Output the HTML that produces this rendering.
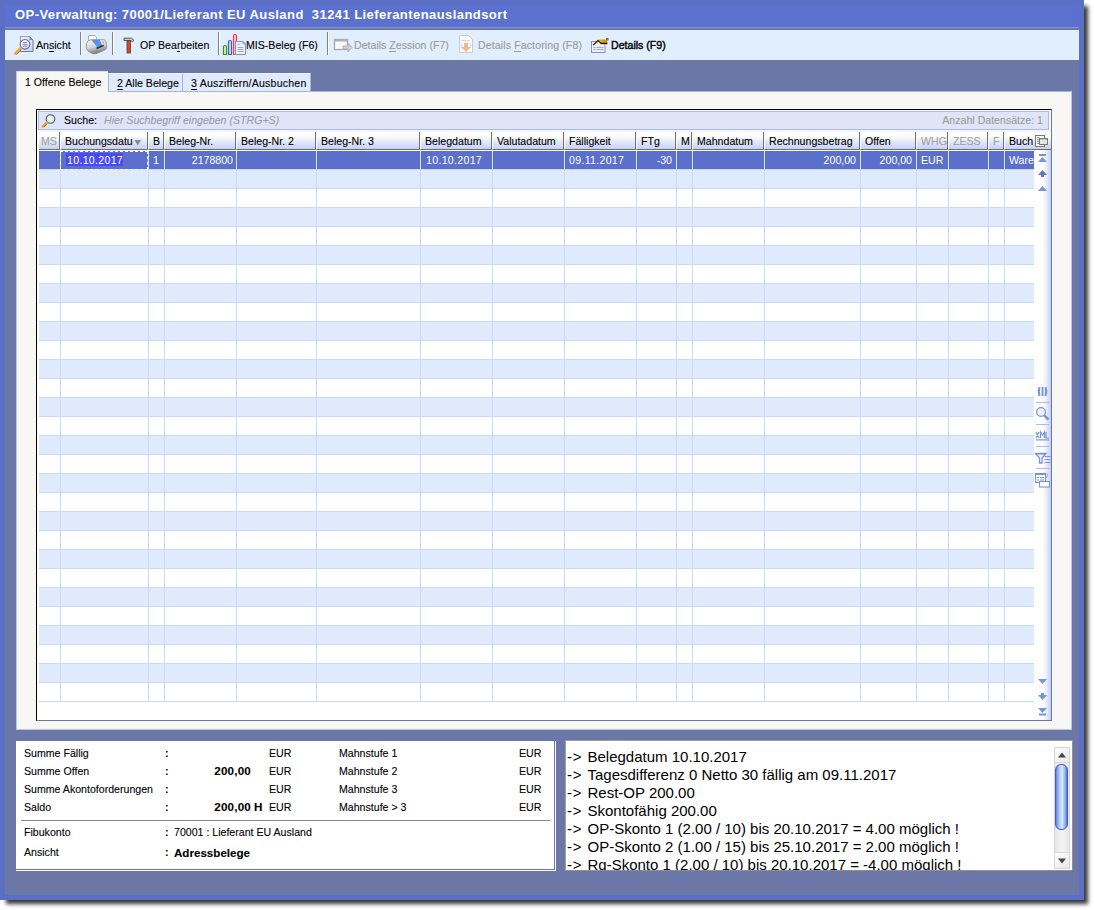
<!DOCTYPE html>
<html><head><meta charset="utf-8">
<style>
*{box-sizing:border-box;margin:0;padding:0}
html,body{width:1094px;height:910px;overflow:hidden;background:#fff;position:relative;font-family:"Liberation Sans",sans-serif;font-size:11px;color:#000}
.t,.st,.hc span{-webkit-text-stroke:0.1px currentColor}
.a{position:absolute}
.t{position:absolute;white-space:pre;line-height:13px;font-size:10.6px}
svg{position:absolute;overflow:visible}
u{text-decoration:none;border-bottom:1px solid currentColor}
.dis{color:#9a9a9a}
.sep{position:absolute;top:32px;width:2px;height:23px;border-left:1px solid #828282;border-right:1px solid #fff}
.hc{position:absolute;top:132px;height:18px;background:linear-gradient(to bottom,#ffffff 0%,#fbfcff 25%,#e2e8f8 60%,#c6d1f1 100%);border-right:1px solid #6e6e6e;border-bottom:1px solid #6e6e6e;border-left:1px solid #fff;overflow:hidden}
.hc span{position:absolute;left:4px;top:3px;white-space:pre;line-height:13px;font-size:10.6px}
.vl{position:absolute;top:151px;width:1px;height:551px;background:#c8d9fa}
.row{position:absolute;left:39px;width:995px;height:19px;border-bottom:1px solid #c8d8f8}
.rt{position:absolute;top:155px;white-space:pre;line-height:13px;font-size:10.6px;color:#fff}
.st{position:absolute;white-space:pre;line-height:13px;font-size:10.6px}
.nsep{position:absolute;left:1036px;width:13px;height:1px;background:#b3b9f2}
</style></head><body>

<div class="a" style="left:0;top:0;width:1084px;height:900px;background:#5b70c5;box-shadow:5px 5px 4px -1px rgba(0,0,0,0.78)"></div>
<div class="a" style="left:5px;top:27px;width:1074px;height:868px;background:#6b78a7"></div>
<div class="a" style="left:5px;top:5px;width:1074px;height:22px;background:#5a71d0"></div>
<div class="a" style="left:5px;top:27px;width:1074px;height:1px;background:#8796cc"></div>
<div class="a" style="left:15px;top:6px;font-weight:bold;font-size:13px;letter-spacing:0.43px;color:#fff;white-space:pre;line-height:17px">OP-Verwaltung: 70001/Lieferant EU Ausland  31241 Lieferantenauslandsort</div>
<div class="a" style="left:5px;top:30px;width:1074px;height:30px;background:#e1eefd"></div>
<span class="t" style="left:36px;top:39px">An<u>s</u>icht</span>
<div class="sep" style="left:80px"></div>
<div class="sep" style="left:112px"></div>
<span class="t" style="left:140px;top:39px">OP Bea<u>r</u>beiten</span>
<div class="sep" style="left:218px"></div>
<span class="t" style="left:246px;top:39px">MIS-Beleg (F6)</span>
<div class="sep" style="left:327px"></div>
<span class="t dis" style="left:354px;top:39px">Details <u>Z</u>ession (F7)</span>
<span class="t dis" style="left:478px;top:39px;letter-spacing:0.1px">Details <u>F</u>actoring (F8)</span>
<span class="t" style="left:611px;top:39px;-webkit-text-stroke:0.4px #000">Details (F9)</span>
<svg style="left:12px;top:34px" width="22" height="22" viewBox="0 0 22 22">
<defs><linearGradient id="dg" x1="0" y1="0" x2="1" y2="1"><stop offset="0" stop-color="#f4f6ff"/><stop offset="1" stop-color="#c6cff8"/></linearGradient>
<radialGradient id="lg" cx="0.35" cy="0.35" r="0.8"><stop offset="0" stop-color="#ffffff"/><stop offset="1" stop-color="#bfe4fb"/></radialGradient></defs>
<path d="M8.5 2.5h9l3.5 3.5v11.5h-12.5z" fill="url(#dg)" stroke="#77779a" stroke-width="1"/>
<path d="M8.5 17.5v-15h9" fill="none" stroke="#8fa2e2" stroke-width="1"/>
<path d="M17.5 2.5l3.5 3.5h-3.5z" fill="#5a8ee8"/>
<circle cx="13" cy="10.3" r="4.8" fill="url(#lg)" stroke="#6d6a86" stroke-width="1.1"/>
<path d="M11 8.6h4M10.6 10.4h4.8M11 12.2h4" stroke="#7a70c0" stroke-width="0.9"/>
<path d="M8.6 14.2l-5.3 5.3" stroke="#f3a530" stroke-width="2.6" stroke-linecap="round"/>
<path d="M9.4 15.6l-5 5" stroke="#6f6f90" stroke-width="0.9"/>
</svg>
<svg style="left:85px;top:34px" width="23" height="20" viewBox="0 0 23 20">
<defs><linearGradient id="pg" x1="0" y1="0" x2="0.3" y2="1"><stop offset="0" stop-color="#fafafa"/><stop offset="0.55" stop-color="#d6d6d6"/><stop offset="1" stop-color="#7c7c7c"/></linearGradient></defs>
<path d="M3.5 1.5h6.5l1.5 2v3h-8z" fill="#fff" stroke="#a9a9b0" stroke-width="0.9"/>
<path d="M1.2 12q0-5.5 4.8-6.3h13q2.5.8 2.6 5v2.5q-.3 2.8-3 3.3l-6.5 2.8q-3 1.2-5.5 0l-3.8-2.5q-1.6-1.6-1.6-4.8z" fill="url(#pg)" stroke="#8a8a8a" stroke-width="0.8"/>
<path d="M6.3 5.8h8.4l2.6 5.6-5.2 1.6z" fill="#4f95ea"/>
<path d="M11.5 13.3l7.3-2.6v1.6l-7.3 3z" fill="#2e2e2e"/>
<circle cx="18.2" cy="8.3" r="0.9" fill="#f0a020"/>
</svg>
<svg style="left:123px;top:37px" width="12" height="17" viewBox="0 0 12 17">
<path d="M1 1.2h7.5l2.5 2.2-1.5 1.3-1.5-1.2H1z" fill="#cfcfcf" stroke="#555" stroke-width="1"/>
<rect x="4" y="4" width="3.5" height="12" fill="#e8401a" stroke="#444" stroke-width="0.8"/>
</svg>
<svg style="left:222px;top:33px" width="26" height="23" viewBox="0 0 26 23">
<path d="M1.5 21.5v-7.5a1.5 1.5 0 0 1 3 0v7.5z" fill="#d8f0d0" stroke="#2a9a10" stroke-width="1.2"/>
<path d="M6.5 21.5v-12.5a1.5 1.5 0 0 1 3 0v12.5z" fill="#d8def5" stroke="#3d5ce0" stroke-width="1.2"/>
<path d="M11.5 21.5v-18.5a1.5 1.5 0 0 1 3 0v18.5z" fill="#e8d0d0" stroke="#ee4040" stroke-width="1.2"/>
<path d="M13.5 8.5h7.5l2.5 2.5v10.5h-10z" fill="#eef1ff" stroke="#8a8fb0"/>
<path d="M21 8.5v2.5h2.5" fill="#7aa0f0" stroke="#7aa0f0" stroke-width="0.8"/>
<path d="M15.5 14.5h6M15.5 16.5h6M15.5 18.5h6M15.5 11.5h2" stroke="#7d93d6" stroke-width="0.8"/>
</svg>
<svg style="left:333px;top:38px" width="20" height="15" viewBox="0 0 20 15">
<rect x="1.5" y="1.5" width="13" height="10" fill="#fafafa" stroke="#a8a8a8" stroke-width="1.3"/>
<rect x="1.5" y="1.5" width="13" height="2" fill="#b0b0b0"/>
<path d="M10 8h5v-3l4 4.5-4 4.5v-3h-5z" fill="#d0d0d0" stroke="#a8a8a8" stroke-width="0.8"/>
</svg>
<svg style="left:458px;top:34px" width="16" height="20" viewBox="0 0 16 20">
<path d="M1.5 1.5h9l4 4v13h-13z" fill="#fbfbfd" stroke="#c8cad6"/>
<path d="M3.5 6.5h9" stroke="#d6d8e6" stroke-width="1.2"/>
<path d="M3.5 9v5M12.5 9v5" stroke="#dfe3ee" stroke-width="1.3"/><path d="M6 9h4v4h3l-5 5-5-5h3z" fill="#f6b890"/>
</svg>
<svg style="left:590px;top:36px" width="20" height="18" viewBox="0 0 20 18">
<defs><linearGradient id="yg" x1="0" y1="0" x2="1" y2="0"><stop offset="0" stop-color="#f6d000"/><stop offset="1" stop-color="#e08a00"/></linearGradient></defs>
<rect x="1.5" y="5.5" width="13.5" height="11" fill="#eef0ff" stroke="#8a8fc0"/>
<path d="M3.5 11.5h2M6.5 11.5h7M3.5 13.5h2M6.5 13.5h7" stroke="#8ea0e0" stroke-width="0.9"/>
<path d="M4 8.5l4-5h9v5h-5.5l-2.5-2.5z" fill="url(#yg)"/>
<path d="M3.3 9l4.7-4.6 3 3h6.5" stroke="#111" stroke-width="1.1" fill="none"/>
<rect x="16" y="2" width="2.5" height="2.5" fill="#5566cc"/>
</svg>
<div class="a" style="left:16px;top:91px;width:1056px;height:639px;background:#f8f7f3;border-top:1px solid #a4b4da;border-left:1px solid #b8c7e8;border-right:1px solid #b8c7e8;border-bottom:1px solid #b8c7e8"></div>
<div class="a" style="left:108px;top:73px;width:75px;height:19px;background:#dfebfc;border:1px solid #a4b6dc;border-top-color:#eef3fd"></div>
<span class="t" style="left:117px;top:77px"><u>2</u> Alle Belege</span>
<div class="a" style="left:182px;top:73px;width:129px;height:19px;background:#dfebfc;border:1px solid #a4b6dc;border-top-color:#eef3fd;border-left-color:#a4b6dc"></div>
<span class="t" style="left:191px;top:77px;letter-spacing:0.2px"><u>3</u> Ausziffern/Ausbuchen</span>
<div class="a" style="left:16px;top:71px;width:92px;height:21px;background:#f8f7f3;border-top:1px solid #d6def2;border-left:1px solid #b8c7e8"></div>
<span class="t" style="left:25px;top:76px">1 Offene Belege</span>
<div class="a" style="left:36px;top:109px;width:1016px;height:612px;background:#fff;border-left:1px solid #000;border-top:1px solid #000;border-right:1px solid #6b78a7;border-bottom:1px solid #6b78a7"></div>
<div class="a" style="left:37px;top:110px;width:1014px;height:22px;background:#f7f6f2"></div>
<div class="a" style="left:38px;top:111px;width:1011px;height:19px;background:#dfe5f7;border:1px solid #a9bcec"></div>
<svg style="left:41px;top:113px" width="16" height="16" viewBox="0 0 16 16">
<circle cx="9.5" cy="6" r="4.3" fill="#d8f2ff" stroke="#555" stroke-width="1.1"/>
<circle cx="9" cy="5.3" r="2" fill="#fff" opacity="0.8"/>
<path d="M6.3 9.2l-4.5 4.5" stroke="#f0a030" stroke-width="2.5" stroke-linecap="round"/>
<path d="M6.3 10.5l-3.2 3.2" stroke="#666" stroke-width="1"/>
</svg>
<span class="st" style="left:64px;top:114px">Suche:</span>
<span class="st" style="left:104px;top:114px;font-style:italic;color:#9c9ca6">Hier Suchbegriff eingeben (STRG+S)</span>
<span class="st" style="right:51px;top:114px;color:#9c9c9c">Anzahl Datensätze: 1</span>
<div class="hc" style="left:39px;width:21px;border-left:none"><span style="color:#a0a0a0;left:2px">MS</span></div>
<div class="hc" style="left:60px;width:88px"><span style="">Buchungsdatum</span></div>
<div class="hc" style="left:148px;width:16px"><span style="">B</span></div>
<div class="hc" style="left:164px;width:72px"><span style="">Beleg-Nr.</span></div>
<div class="hc" style="left:236px;width:80px"><span style="">Beleg-Nr. 2</span></div>
<div class="hc" style="left:316px;width:104px"><span style="">Beleg-Nr. 3</span></div>
<div class="hc" style="left:420px;width:72px"><span style="">Belegdatum</span></div>
<div class="hc" style="left:492px;width:72px"><span style="">Valutadatum</span></div>
<div class="hc" style="left:564px;width:72px"><span style="">Fälligkeit</span></div>
<div class="hc" style="left:636px;width:40px"><span style="">FTg</span></div>
<div class="hc" style="left:676px;width:16px"><span style="">M</span></div>
<div class="hc" style="left:692px;width:72px"><span style="">Mahndatum</span></div>
<div class="hc" style="left:764px;width:96px"><span style="">Rechnungsbetrag</span></div>
<div class="hc" style="left:860px;width:56px"><span style="">Offen</span></div>
<div class="hc" style="left:916px;width:32px"><span style="color:#a0a0a0">WHG</span></div>
<div class="hc" style="left:948px;width:40px"><span style="color:#a0a0a0">ZESS</span></div>
<div class="hc" style="left:988px;width:16px"><span style="color:#a0a0a0">F</span></div>
<div class="hc" style="left:1004px;width:47px;border-right:none"><span style="">Buch</span></div>
<div class="a" style="left:133px;top:138px;width:9px;height:9px;background:linear-gradient(to bottom,#e6ebf8,#d0d9f3)"></div>
<svg style="left:134px;top:139px" width="8" height="8" viewBox="0 0 8 8"><path d="M0.5 1h6.5l-3.25 5.5z" fill="#8c8c8c"/></svg>
<svg style="left:1034px;top:134px" width="15" height="14" viewBox="0 0 15 14">
<rect x="1.5" y="1.5" width="9" height="11" fill="#fff" stroke="#777"/>
<path d="M3 3.6h2.5M3 5.6h2.5M3 7.6h2.5M3 9.6h2.5" stroke="#777" stroke-width="0.9"/>
<rect x="5.5" y="4.5" width="8" height="6" fill="#e6e6de" stroke="#777"/>
<rect x="5" y="4" width="9" height="1.3" fill="#777"/>
</svg>
<div class="a" style="left:37px;top:150px;width:1014px;height:1px;background:#fff"></div>
<div class="a" style="left:39px;top:151px;width:995px;height:18px;background:#5a70cc"></div>
<div class="a" style="left:39px;top:169px;width:995px;height:1px;background:#c8d9fa"></div>
<div class="a" style="left:39px;top:170px;width:995px;height:18px;background:#dfebfd"></div>
<div class="a" style="left:39px;top:188px;width:995px;height:1px;background:#c8d9fa"></div>
<div class="a" style="left:39px;top:189px;width:995px;height:18px;background:#fff"></div>
<div class="a" style="left:39px;top:207px;width:995px;height:1px;background:#c8d9fa"></div>
<div class="a" style="left:39px;top:208px;width:995px;height:18px;background:#dfebfd"></div>
<div class="a" style="left:39px;top:226px;width:995px;height:1px;background:#c8d9fa"></div>
<div class="a" style="left:39px;top:227px;width:995px;height:18px;background:#fff"></div>
<div class="a" style="left:39px;top:245px;width:995px;height:1px;background:#c8d9fa"></div>
<div class="a" style="left:39px;top:246px;width:995px;height:18px;background:#dfebfd"></div>
<div class="a" style="left:39px;top:264px;width:995px;height:1px;background:#c8d9fa"></div>
<div class="a" style="left:39px;top:265px;width:995px;height:18px;background:#fff"></div>
<div class="a" style="left:39px;top:283px;width:995px;height:1px;background:#c8d9fa"></div>
<div class="a" style="left:39px;top:284px;width:995px;height:18px;background:#dfebfd"></div>
<div class="a" style="left:39px;top:302px;width:995px;height:1px;background:#c8d9fa"></div>
<div class="a" style="left:39px;top:303px;width:995px;height:18px;background:#fff"></div>
<div class="a" style="left:39px;top:321px;width:995px;height:1px;background:#c8d9fa"></div>
<div class="a" style="left:39px;top:322px;width:995px;height:18px;background:#dfebfd"></div>
<div class="a" style="left:39px;top:340px;width:995px;height:1px;background:#c8d9fa"></div>
<div class="a" style="left:39px;top:341px;width:995px;height:18px;background:#fff"></div>
<div class="a" style="left:39px;top:359px;width:995px;height:1px;background:#c8d9fa"></div>
<div class="a" style="left:39px;top:360px;width:995px;height:18px;background:#dfebfd"></div>
<div class="a" style="left:39px;top:378px;width:995px;height:1px;background:#c8d9fa"></div>
<div class="a" style="left:39px;top:379px;width:995px;height:18px;background:#fff"></div>
<div class="a" style="left:39px;top:397px;width:995px;height:1px;background:#c8d9fa"></div>
<div class="a" style="left:39px;top:398px;width:995px;height:18px;background:#dfebfd"></div>
<div class="a" style="left:39px;top:416px;width:995px;height:1px;background:#c8d9fa"></div>
<div class="a" style="left:39px;top:417px;width:995px;height:18px;background:#fff"></div>
<div class="a" style="left:39px;top:435px;width:995px;height:1px;background:#c8d9fa"></div>
<div class="a" style="left:39px;top:436px;width:995px;height:18px;background:#dfebfd"></div>
<div class="a" style="left:39px;top:454px;width:995px;height:1px;background:#c8d9fa"></div>
<div class="a" style="left:39px;top:455px;width:995px;height:18px;background:#fff"></div>
<div class="a" style="left:39px;top:473px;width:995px;height:1px;background:#c8d9fa"></div>
<div class="a" style="left:39px;top:474px;width:995px;height:18px;background:#dfebfd"></div>
<div class="a" style="left:39px;top:492px;width:995px;height:1px;background:#c8d9fa"></div>
<div class="a" style="left:39px;top:493px;width:995px;height:18px;background:#fff"></div>
<div class="a" style="left:39px;top:511px;width:995px;height:1px;background:#c8d9fa"></div>
<div class="a" style="left:39px;top:512px;width:995px;height:18px;background:#dfebfd"></div>
<div class="a" style="left:39px;top:530px;width:995px;height:1px;background:#c8d9fa"></div>
<div class="a" style="left:39px;top:531px;width:995px;height:18px;background:#fff"></div>
<div class="a" style="left:39px;top:549px;width:995px;height:1px;background:#c8d9fa"></div>
<div class="a" style="left:39px;top:550px;width:995px;height:18px;background:#dfebfd"></div>
<div class="a" style="left:39px;top:568px;width:995px;height:1px;background:#c8d9fa"></div>
<div class="a" style="left:39px;top:569px;width:995px;height:18px;background:#fff"></div>
<div class="a" style="left:39px;top:587px;width:995px;height:1px;background:#c8d9fa"></div>
<div class="a" style="left:39px;top:588px;width:995px;height:18px;background:#dfebfd"></div>
<div class="a" style="left:39px;top:606px;width:995px;height:1px;background:#c8d9fa"></div>
<div class="a" style="left:39px;top:607px;width:995px;height:18px;background:#fff"></div>
<div class="a" style="left:39px;top:625px;width:995px;height:1px;background:#c8d9fa"></div>
<div class="a" style="left:39px;top:626px;width:995px;height:18px;background:#dfebfd"></div>
<div class="a" style="left:39px;top:644px;width:995px;height:1px;background:#c8d9fa"></div>
<div class="a" style="left:39px;top:645px;width:995px;height:18px;background:#fff"></div>
<div class="a" style="left:39px;top:663px;width:995px;height:1px;background:#c8d9fa"></div>
<div class="a" style="left:39px;top:664px;width:995px;height:18px;background:#dfebfd"></div>
<div class="a" style="left:39px;top:682px;width:995px;height:1px;background:#c8d9fa"></div>
<div class="a" style="left:39px;top:683px;width:995px;height:18px;background:#fff"></div>
<div class="a" style="left:39px;top:701px;width:995px;height:1px;background:#c8d9fa"></div>
<div class="vl" style="left:60px"></div>
<div class="vl" style="left:148px"></div>
<div class="vl" style="left:164px"></div>
<div class="vl" style="left:236px"></div>
<div class="vl" style="left:316px"></div>
<div class="vl" style="left:420px"></div>
<div class="vl" style="left:492px"></div>
<div class="vl" style="left:564px"></div>
<div class="vl" style="left:636px"></div>
<div class="vl" style="left:676px"></div>
<div class="vl" style="left:692px"></div>
<div class="vl" style="left:764px"></div>
<div class="vl" style="left:860px"></div>
<div class="vl" style="left:916px"></div>
<div class="vl" style="left:948px"></div>
<div class="vl" style="left:988px"></div>
<div class="vl" style="left:1004px"></div>
<div class="vl" style="left:1034px;background:#c8d8f8"></div>
<div class="a" style="left:60px;top:151px;width:1px;height:18px;background:#d8e2fb"></div>
<div class="a" style="left:148px;top:151px;width:1px;height:18px;background:#d8e2fb"></div>
<div class="a" style="left:164px;top:151px;width:1px;height:18px;background:#d8e2fb"></div>
<div class="a" style="left:236px;top:151px;width:1px;height:18px;background:#d8e2fb"></div>
<div class="a" style="left:316px;top:151px;width:1px;height:18px;background:#d8e2fb"></div>
<div class="a" style="left:420px;top:151px;width:1px;height:18px;background:#d8e2fb"></div>
<div class="a" style="left:492px;top:151px;width:1px;height:18px;background:#d8e2fb"></div>
<div class="a" style="left:564px;top:151px;width:1px;height:18px;background:#d8e2fb"></div>
<div class="a" style="left:636px;top:151px;width:1px;height:18px;background:#d8e2fb"></div>
<div class="a" style="left:676px;top:151px;width:1px;height:18px;background:#d8e2fb"></div>
<div class="a" style="left:692px;top:151px;width:1px;height:18px;background:#d8e2fb"></div>
<div class="a" style="left:764px;top:151px;width:1px;height:18px;background:#d8e2fb"></div>
<div class="a" style="left:860px;top:151px;width:1px;height:18px;background:#d8e2fb"></div>
<div class="a" style="left:916px;top:151px;width:1px;height:18px;background:#d8e2fb"></div>
<div class="a" style="left:948px;top:151px;width:1px;height:18px;background:#d8e2fb"></div>
<div class="a" style="left:988px;top:151px;width:1px;height:18px;background:#d8e2fb"></div>
<div class="a" style="left:1004px;top:151px;width:1px;height:18px;background:#d8e2fb"></div>
<div class="a" style="left:60px;top:151px;width:88px;height:19px;border:1px dashed #fff;border-top-color:#fff"></div>
<div class="a" style="left:66px;top:153px;width:57px;height:13px;background:#4a4af2"></div>
<span class="rt" style="left:67px;top:154px;letter-spacing:0.3px">10.10.2017</span>
<span class="rt" style="left:153px;top:154px">1</span>
<span class="rt" style="right:861px;top:154px">2178800</span>
<span class="rt" style="left:426px;top:154px;letter-spacing:0.3px">10.10.2017</span>
<span class="rt" style="left:569px;top:154px;letter-spacing:0.3px">09.11.2017</span>
<span class="rt" style="right:422px;top:154px">-30</span>
<span class="rt" style="right:238px;top:154px">200,00</span>
<span class="rt" style="right:182px;top:154px">200,00</span>
<span class="rt" style="left:921px;top:154px">EUR</span>
<div class="a" style="left:1004px;top:151px;width:30px;height:18px;overflow:hidden"><span class="rt" style="left:5px;top:3px">Ware</span></div>
<div class="a" style="left:1034px;top:150px;width:17px;height:570px;background:linear-gradient(to right,#fff 0%,#fff 50%,#e6ecfb 75%,#c2cef3 100%)"></div>
<svg style="left:1034px;top:150px" width="17" height="570" viewBox="0 0 17 570">
<rect x="5" y="4" width="7" height="2" fill="#7b93d9"/>
<path d="M4 12l4.5-5 4.5 5z" fill="#7b93d9"/>
<path d="M4 25l4.5-5 4.5 5h-3v2h-3v-2z" fill="#6676b0"/>
<path d="M4 41l4.5-5 4.5 5z" fill="#7b93d9"/>
<path d="M5.5 237.2q-1.6 4.3 0 8.6M11.5 237.2q1.6 4.3 0 8.6" stroke="#7b93d9" stroke-width="2.2" fill="none"/>
<rect x="7.6" y="237" width="1.9" height="9" fill="#7b93d9"/>
<rect x="2" y="252" width="13" height="1" fill="#b1b6f3"/>
<circle cx="7" cy="262" r="4.4" fill="#f2f0ff" stroke="#7b93d9" stroke-width="1.3"/>
<path d="M10 265.2l4.5 4.5" stroke="#7b93d9" stroke-width="2.6"/>
<rect x="2" y="274" width="13" height="1" fill="#b1b6f3"/>
<path d="M2 282l3 6M5 282l-3 6M6.5 288v-6l2 3 2-3v6M12 282v6h3" stroke="#7b93d9" stroke-width="1.2" fill="none"/>
<rect x="2" y="289.3" width="13" height="1.2" fill="#7b93d9"/>
<rect x="2" y="296" width="13" height="1" fill="#b1b6f3"/>
<path d="M1.5 303.5h10.5l-4 4.5v5h-2.5v-5z" fill="#f4f6ff" stroke="#7b93d9" stroke-width="1.3"/>
<rect x="1.5" y="303" width="10.5" height="1.5" fill="#7b93d9"/>
<path d="M10.5 306.5h6M10.5 309.5h6M10.5 312.5h6" stroke="#7b93d9" stroke-width="1.1"/>
<rect x="2" y="318" width="13" height="1" fill="#b1b6f3"/>
<rect x="1.5" y="323.5" width="10" height="9" fill="#fff" stroke="#7b93d9" stroke-width="1.1"/>
<rect x="1.5" y="323.5" width="10" height="1.5" fill="#7b93d9"/>
<path d="M3 327.5h2M6 327.5h4M3 330h2M6 330h4" stroke="#7b93d9" stroke-width="1"/>
<rect x="5.5" y="331.5" width="10" height="5.5" fill="#fff" stroke="#7b93d9" stroke-width="1.1"/>
<path d="M12.5 323.5q2 1.5 0 4l-1.5 1.5" stroke="#7b93d9" stroke-width="0.9" fill="none"/>
<path d="M4 529l4.5 5 4.5-5z" fill="#7b93d9"/>
<path d="M4 545h3v-2h3v2h3l-4.5 5z" fill="#7b93d9"/>
<path d="M4 558l4.5 5 4.5-5z" fill="#7b93d9"/>
<rect x="5" y="563.5" width="7" height="2" fill="#7b93d9"/>
</svg>
<div class="a" style="left:16px;top:741px;width:541px;height:130px;background:#fff"></div>
<div class="a" style="left:554px;top:741px;width:1px;height:129px;background:#6b78a7"></div>
<div class="a" style="left:16px;top:869px;width:539px;height:1px;background:#6b78a7"></div>
<div class="a" style="left:556px;top:741px;width:1px;height:130px;background:#6b78a7"></div>
<div class="a" style="left:16px;top:871px;width:541px;height:1px;background:#6b78a7"></div>
<span class="st" style="left:24px;top:747px">Summe Fällig</span>
<span class="st" style="left:165px;top:747px;font-weight:bold">:</span>
<span class="st" style="left:269px;top:747px">EUR</span>
<span class="st" style="left:339px;top:747px">Mahnstufe 1</span>
<span class="st" style="left:519px;top:747px">EUR</span>
<span class="st" style="left:24px;top:765px">Summe Offen</span>
<span class="st" style="left:165px;top:765px;font-weight:bold">:</span>
<span class="st" style="right:843px;top:764px;font-weight:bold;font-size:11.6px;letter-spacing:0.2px">200,00</span>
<span class="st" style="left:269px;top:765px">EUR</span>
<span class="st" style="left:339px;top:765px">Mahnstufe 2</span>
<span class="st" style="left:519px;top:765px">EUR</span>
<span class="st" style="left:24px;top:783px">Summe Akontoforderungen</span>
<span class="st" style="left:165px;top:783px;font-weight:bold">:</span>
<span class="st" style="left:269px;top:783px">EUR</span>
<span class="st" style="left:339px;top:783px">Mahnstufe 3</span>
<span class="st" style="left:519px;top:783px">EUR</span>
<span class="st" style="left:24px;top:801px">Saldo</span>
<span class="st" style="left:165px;top:801px;font-weight:bold">:</span>
<span class="st" style="right:843px;top:800px;font-weight:bold;font-size:11.6px;letter-spacing:0.2px">200,00</span>
<span class="st" style="left:254px;top:800px;font-weight:bold;font-size:11.6px">H</span>
<span class="st" style="left:269px;top:801px">EUR</span>
<span class="st" style="left:339px;top:801px">Mahnstufe &gt; 3</span>
<span class="st" style="left:519px;top:801px">EUR</span>
<div class="a" style="left:21px;top:820px;width:529px;height:1px;background:#8a8a8a"></div>
<span class="st" style="left:24px;top:826px">Fibukonto</span>
<span class="st" style="left:165px;top:826px;font-weight:bold">:</span>
<span class="st" style="left:174px;top:826px">70001 : Lieferant EU Ausland</span>
<span class="st" style="left:24px;top:846px">Ansicht</span>
<span class="st" style="left:165px;top:846px;font-weight:bold">:</span>
<span class="st" style="left:174px;top:846px;font-weight:bold;font-size:11.6px">Adressbelege</span>
<div class="a" style="left:565px;top:740px;width:508px;height:131px;background:#fff;border:1px solid #8f8f8f;border-top-color:#a0a0a0;border-left-color:#a0a0a0;overflow:hidden">
<span style="position:absolute;left:1px;top:7px;white-space:pre;font-size:15px;line-height:18px;letter-spacing:0.8px">-&gt;</span>
<span style="position:absolute;left:21.5px;top:7px;white-space:pre;font-size:15px;line-height:18px">Belegdatum 10.10.2017</span>
<span style="position:absolute;left:1px;top:25px;white-space:pre;font-size:15px;line-height:18px;letter-spacing:0.8px">-&gt;</span>
<span style="position:absolute;left:21.5px;top:25px;white-space:pre;font-size:15px;line-height:18px">Tagesdifferenz 0 Netto 30 fällig am 09.11.2017</span>
<span style="position:absolute;left:1px;top:43px;white-space:pre;font-size:15px;line-height:18px;letter-spacing:0.8px">-&gt;</span>
<span style="position:absolute;left:21.5px;top:43px;white-space:pre;font-size:15px;line-height:18px">Rest-OP 200.00</span>
<span style="position:absolute;left:1px;top:61px;white-space:pre;font-size:15px;line-height:18px;letter-spacing:0.8px">-&gt;</span>
<span style="position:absolute;left:21.5px;top:61px;white-space:pre;font-size:15px;line-height:18px">Skontofähig 200.00</span>
<span style="position:absolute;left:1px;top:79px;white-space:pre;font-size:15px;line-height:18px;letter-spacing:0.8px">-&gt;</span>
<span style="position:absolute;left:21.5px;top:79px;white-space:pre;font-size:15px;line-height:18px">OP-Skonto 1 (2.00 / 10) bis 20.10.2017 = 4.00 möglich !</span>
<span style="position:absolute;left:1px;top:97px;white-space:pre;font-size:15px;line-height:18px;letter-spacing:0.8px">-&gt;</span>
<span style="position:absolute;left:21.5px;top:97px;white-space:pre;font-size:15px;line-height:18px">OP-Skonto 2 (1.00 / 15) bis 25.10.2017 = 2.00 möglich !</span>
<span style="position:absolute;left:1px;top:115px;white-space:pre;font-size:15px;line-height:18px;letter-spacing:0.8px">-&gt;</span>
<span style="position:absolute;left:21.5px;top:115px;white-space:pre;font-size:15px;line-height:18px">Rg-Skonto 1 (2.00 / 10) bis 20.10.2017 = -4.00 möglich !</span>
</div>
<div class="a" style="left:1054px;top:747px;width:16px;height:122px;background:linear-gradient(to right,#e6e6e6,#f4f4f4 50%,#e9e9e9);border:1px solid #d6d6d6"></div>
<div class="a" style="left:1055px;top:748px;width:14px;height:15px;background:linear-gradient(135deg,#fdfdfd,#e9e9e9);border-bottom:1px solid #d8d8d8"></div>
<svg style="left:1058px;top:752px" width="8" height="6" viewBox="0 0 8 6"><path d="M0 5.5l4-5 4 5z" fill="#444"/></svg>
<div class="a" style="left:1055px;top:852px;width:14px;height:16px;background:linear-gradient(135deg,#fdfdfd,#e9e9e9);border-top:1px solid #d8d8d8"></div>
<svg style="left:1058px;top:858px" width="8" height="6" viewBox="0 0 8 6"><path d="M0 .5l4 5 4-5z" fill="#444"/></svg>
<div class="a" style="left:1055px;top:764px;width:13px;height:66px;border-radius:6px;background:linear-gradient(to right,#6a84e0,#b9d2fb 35%,#d8ecff 55%,#9ab6f4 80%,#5a74d6);border:1px solid #3d5cc8"></div>
</body></html>
